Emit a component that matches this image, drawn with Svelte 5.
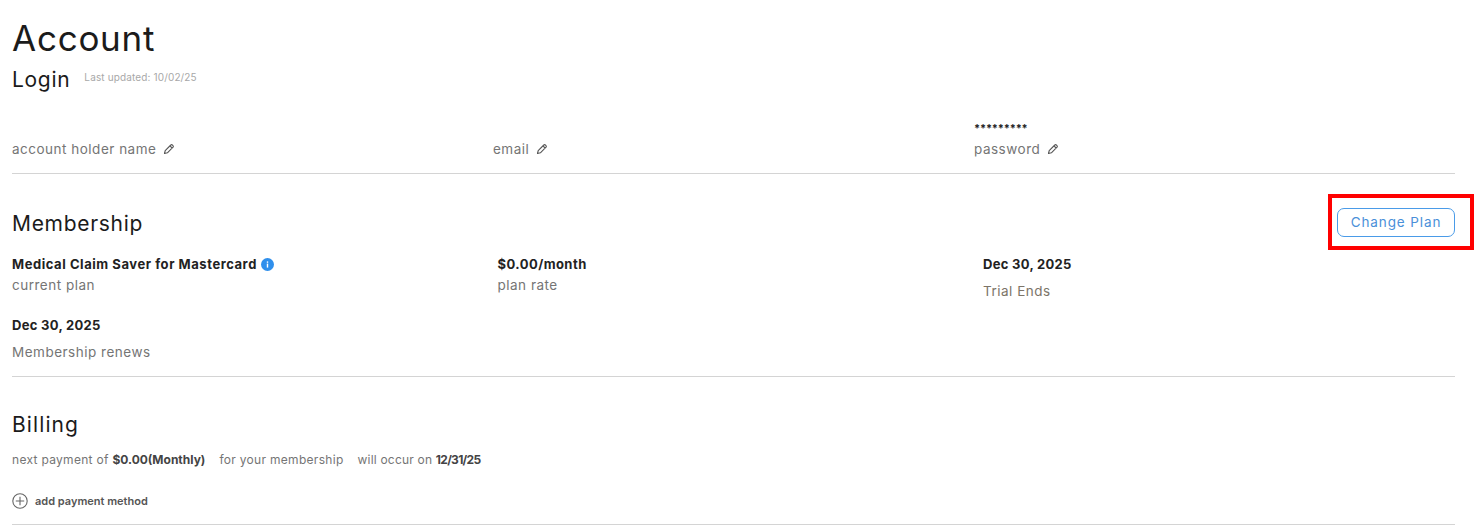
<script>
  const pencil = "M1.5 10.5 L2.2 7.6 L7.8 2 a1.1 1.1 0 0 1 1.6 0 L10 2.6 a1.1 1.1 0 0 1 0 1.6 L4.4 9.8 Z M7 2.9 L9.1 5";
</script>

{#snippet edit()}
  <svg class="pencil" width="12" height="12" viewBox="0 0 12 12" aria-hidden="true">
    <path d={pencil} fill="none" stroke="#555" stroke-width="1.1" stroke-linejoin="round" />
  </svg>
{/snippet}

<main class="page">
  <h1>Account</h1>
  <div class="login-head">
    <h2>Login</h2>
    <span class="updated">Last updated: 10/02/25</span>
  </div>

  <section class="login-grid">
    <div class="field"><span class="label">account holder name {@render edit()}</span></div>
    <div class="field"><span class="label">email {@render edit()}</span></div>
    <div class="field">
      <span class="mask">*********</span>
      <span class="label">password {@render edit()}</span>
    </div>
  </section>

  <section class="membership">
    <div class="section-head">
      <h2>Membership</h2>
      <button class="change">Change Plan</button>
    </div>
    <div class="plan-grid">
      <div class="cell">
        <div class="strong wide">Medical Claim Saver for Mastercard
          <svg class="info" width="13" height="13" viewBox="0 0 13 13" aria-hidden="true">
            <circle cx="6.5" cy="6.5" r="6.5" fill="#2f8fec" />
            <rect x="5.8" y="5.6" width="1.4" height="4" fill="#fff" />
            <rect x="5.8" y="3.4" width="1.4" height="1.4" fill="#fff" />
          </svg>
        </div>
        <div class="label near">current plan</div>
      </div>
      <div class="cell">
        <div class="strong rate">$0.00/month</div>
        <div class="label near">plan rate</div>
      </div>
      <div class="cell">
        <div class="strong">Dec 30, 2025</div>
        <div class="label far warm">Trial Ends</div>
      </div>
      <div class="cell second">
        <div class="strong">Dec 30, 2025</div>
        <div class="label far">Membership renews</div>
      </div>
    </div>
  </section>

  <section class="billing">
    <h2 class="billing-title">Billing</h2>
    <p class="next">
      <span>next payment of <b>$0.00(Monthly)</b></span>
      <span>for your membership</span>
      <span class="occur">will occur on <b class="date">12/31/25</b></span>
    </p>
    <div class="add">
      <svg width="16" height="16" viewBox="0 0 16 16" aria-hidden="true">
        <circle cx="8" cy="8" r="7.2" fill="none" stroke="#666" stroke-width="1.1" />
        <path d="M8 3.8 V12.2 M3.8 8 H12.2" stroke="#666" stroke-width="1.1" />
      </svg>
      <span>add payment method</span>
    </div>
  </section>

  <div class="highlight" aria-hidden="true"></div>
</main>

<style>
  :global(body) {
    margin: 0;
    background: #fff;
  }
  .page {
    position: relative;
    box-sizing: border-box;
    width: 1474px;
    height: 526px;
    padding: 0 19px 0 12px;
    overflow: hidden;
    font-family: "Inter", "Liberation Sans", sans-serif;
    color: #1b1b1b;
  }
  h1 {
    margin: 0;
    padding-top: 16px;
    font-size: 35px;
    line-height: 44px;
    font-weight: 400;
    letter-spacing: 0.75px;
  }
  h2 {
    margin: 0;
    font-size: 21px;
    line-height: 28px;
    font-weight: 400;
    letter-spacing: 0.7px;
  }
  .login-head {
    display: flex;
    align-items: flex-start;
    gap: 14px;
    margin-top: 6px;
  }
  .updated {
    font-size: 10px;
    line-height: 22px;
    color: #a8a8a8;
    letter-spacing: 0.14px;
  }
  .login-grid {
    display: grid;
    grid-template-columns: repeat(3, 481px);
    align-items: end;
    height: 80px;
    padding-bottom: 15px;
    box-sizing: border-box;
    border-bottom: 1px solid #d4d4d4;
  }
  .field {
    display: flex;
    flex-direction: column;
    gap: 5px;
  }
  .mask {
    font-size: 11px;
    line-height: 14px;
    font-weight: 700;
    color: #222;
    letter-spacing: -0.2px;
  }
  .label {
    font-size: 13.5px;
    line-height: 18px;
    color: #757575;
    letter-spacing: 0.5px;
  }
  .pencil {
    margin-left: 2px;
    vertical-align: -1px;
  }
  .membership {
    border-bottom: 1px solid #d4d4d4;
    height: 202px;
  }
  .section-head {
    display: flex;
    justify-content: space-between;
    align-items: flex-start;
    padding-top: 34px;
  }
  .section-head h2 {
    margin-top: 2px;
  }
  .change {
    box-sizing: border-box;
    width: 118px;
    height: 29px;
    background: #fff;
    border: 1px solid #4a9be8;
    border-radius: 7px;
    color: #4a90d9;
    font: inherit;
    font-size: 13.5px;
    letter-spacing: 0.9px;
    padding: 0 0 2px;
  }
  .plan-grid {
    display: grid;
    grid-template-columns: 485.5px 485.5px 472px;
    row-gap: 16px;
    margin-top: 17px;
  }
  .strong {
    font-size: 13px;
    line-height: 18px;
    font-weight: 700;
    color: #222;
    letter-spacing: 0.3px;
  }
  .wide {
    letter-spacing: 0.55px;
  }
  .rate {
    letter-spacing: 0.45px;
  }
  .info {
    vertical-align: -2px;
    margin-left: 0;
  }
  .near {
    margin-top: 3px;
  }
  .far {
    margin-top: 9px;
  }
  .warm {
    color: #7c7468;
  }
  .second {
    grid-column: 1;
  }
  .billing {
    padding-top: 34px;
    height: 148px;
    box-sizing: border-box;
    border-bottom: 1px solid #d4d4d4;
  }
  .billing-title {
    letter-spacing: 1.1px;
  }
  .next {
    display: flex;
    gap: 14px;
    margin: 12px 0 0;
    font-size: 12px;
    line-height: 18px;
    color: #757575;
    letter-spacing: 0.3px;
  }
  .next b {
    color: #444;
    letter-spacing: 0;
  }
  .occur {
    letter-spacing: 0.2px;
  }
  .next .date {
    letter-spacing: -0.7px;
  }
  .add {
    display: flex;
    align-items: center;
    gap: 7px;
    margin-top: 24px;
    font-size: 11px;
    font-weight: 600;
    color: #555;
  }
  .highlight {
    position: absolute;
    left: 1328px;
    top: 194px;
    width: 146px;
    height: 56px;
    box-sizing: border-box;
    border: 4px solid #f00;
  }
</style>
